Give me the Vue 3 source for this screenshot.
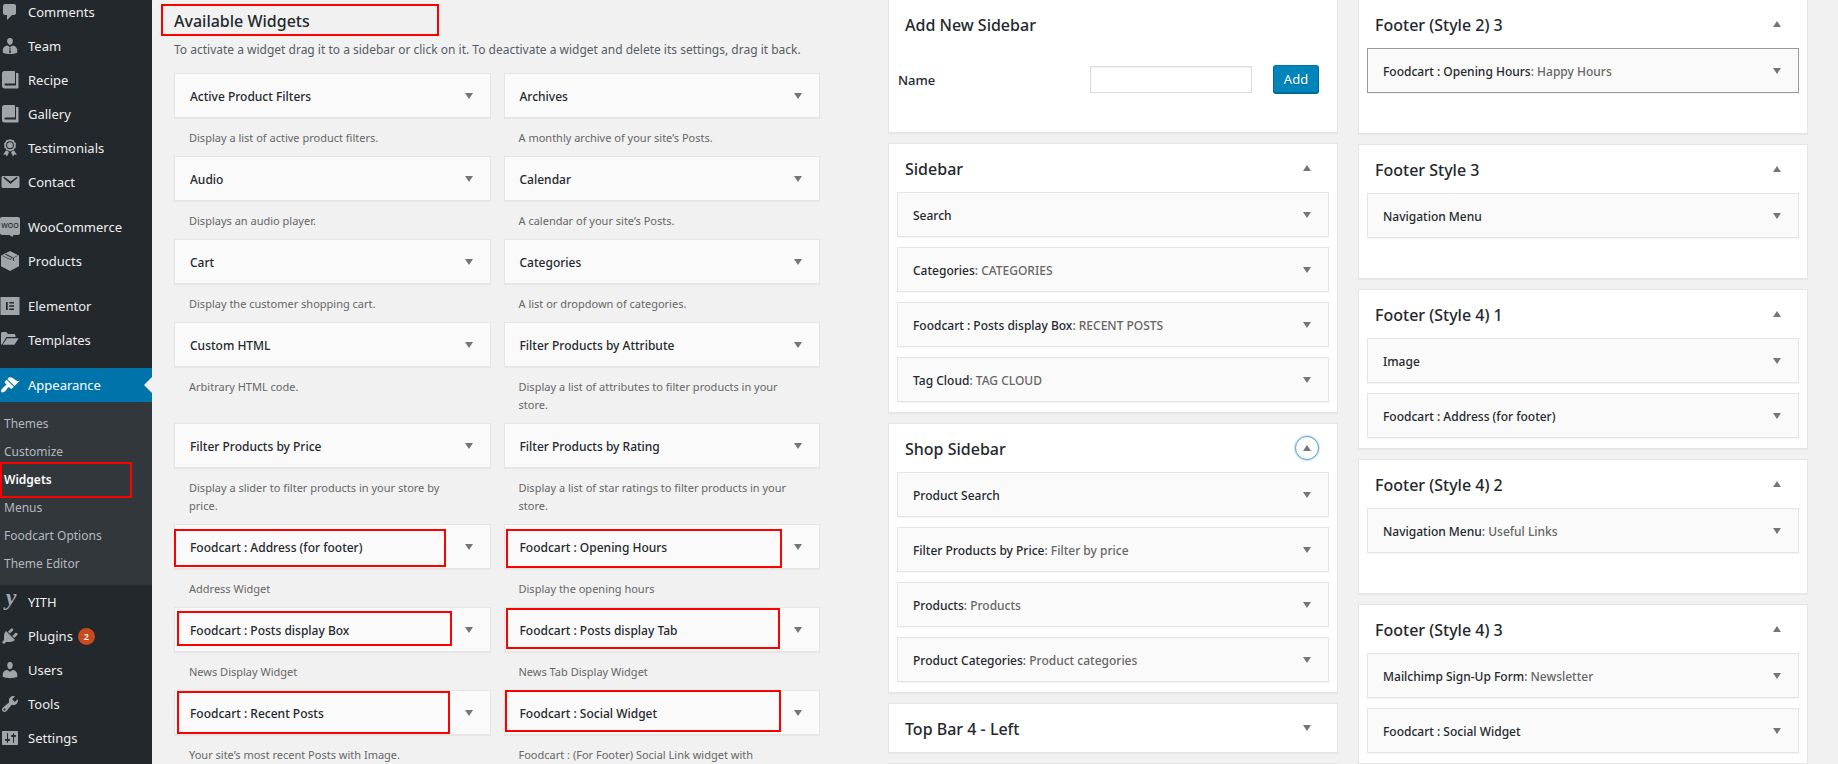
<template>
  <div class="admin">
    <nav class="menu" aria-label="Main menu">
      <ul class="menu-list">
        <li
          v-for="item in menu"
          :key="item.label"
          :class="{ 'menu-item--spaced': item.spaced }"
        >
          <a href="#" class="menu-link" :class="{ 'menu-link--current': item.children }">
            <svg class="menu-icon" viewBox="0 0 20 20" aria-hidden="true">
              <path :d="icons[item.icon]" fill-rule="evenodd" />
              <text v-if="item.icon === 'woo'" x="10" y="11" class="woo-mark">WOO</text>
              <text v-if="item.icon === 'yith'" x="11" y="13" class="yith-mark">y</text>
            </svg>
            <span>{{ item.label }}</span>
            <span v-if="item.count" class="menu-count">{{ item.count }}</span>
          </a>
          <ul v-if="item.children" class="submenu">
            <li v-for="child in item.children" :key="child">
              <a href="#" class="submenu-link" :class="{ 'submenu-link--current': child === 'Widgets' }">{{ child }}</a>
              <span v-if="child === 'Widgets'" class="marker marker--submenu"></span>
            </li>
          </ul>
        </li>
      </ul>
    </nav>

    <main class="content">
      <section class="available" aria-labelledby="available-heading">
        <header class="available-header">
          <h2 id="available-heading">Available Widgets</h2>
          <span class="marker marker--heading"></span>
          <p>To activate a widget drag it to a sidebar or click on it. To deactivate a widget and delete its settings, drag it back.</p>
        </header>
        <ul class="available-list">
          <li v-for="widget in available" :key="widget.title" class="available-item">
            <div class="widget">
              <h3>{{ widget.title }}</h3>
              <button type="button" class="toggle" :aria-label="`Add widget: ${widget.title}`">
                <svg viewBox="0 0 8 6" aria-hidden="true"><path d="M0 0h8L4 6z" /></svg>
              </button>
            </div>
            <span v-if="widget.mark" class="marker" :style="markerStyle(widget.mark)"></span>
            <p class="widget-description">{{ widget.description }}</p>
          </li>
        </ul>
      </section>

      <div class="sidebars">
        <div v-for="(column, index) in columns" :key="index" class="sidebars-column">
          <section v-if="index === 0" class="panel">
            <header class="panel-header">
              <h2>Add New Sidebar</h2>
            </header>
            <form class="add-form" @submit.prevent>
              <label for="sidebar-name">Name</label>
              <input id="sidebar-name" v-model="sidebarName" type="text" />
              <button type="submit" class="add-button">Add</button>
            </form>
          </section>
          <section v-for="panel in column" :key="panel.title" class="panel">
            <header class="panel-header">
              <h2>{{ panel.title }}</h2>
              <button
                v-if="panel.title"
                type="button"
                class="toggle"
                :class="{ 'toggle--focused': panel.focused }"
                :aria-label="panel.title"
                :aria-expanded="Boolean(panel.widgets)"
              >
                <svg viewBox="0 0 8 6" aria-hidden="true"><path :d="panel.widgets ? 'M0 6h8L4 0z' : 'M0 0h8L4 6z'" /></svg>
              </button>
            </header>
            <ul v-if="panel.widgets" class="panel-widgets">
              <li
                v-for="[title, name] in panel.widgets"
                :key="title"
                class="widget"
                :class="{ 'widget--hover': panel.hovered }"
              >
                <h3>{{ title }}<span v-if="name" class="widget-name">: {{ name }}</span></h3>
                <button type="button" class="toggle" :aria-label="`Edit widget: ${title}`">
                  <svg viewBox="0 0 8 6" aria-hidden="true"><path d="M0 0h8L4 6z" /></svg>
                </button>
              </li>
            </ul>
          </section>
        </div>
      </div>
    </main>
  </div>
</template>

<script setup>
import { ref } from "vue";

const sidebarName = ref("");

const icons = {
  comments: "M5 2h9c1.1 0 2 .9 2 2v7c0 1.1-.9 2-2 2h-2l-5 5v-5H5c-1.1 0-2-.9-2-2V4c0-1.1.9-2 2-2z",
  team: "M10 2c1.8 0 2.9 1.3 2.9 3.1C12.900 7 11.600 8.900 10 8.900S7.100 7 7.100 5.100C7.100 3.300 8.200 2 10 2zM7.300 9.600 10 11l2.700-1.400c2.600.4 4.500 2.200 4.500 4.500v2.700c-2 .8-4.500 1.200-7.200 1.200s-5.200-.4-7.200-1.200v-2.700c0-2.300 1.900-4.100 4.500-4.500zM9.200 11.800l.5 1.200-.6 3.500.9 1 .9-1-.6-3.500.5-1.200z",
  book: "M4.500 1H14c.6 0 1 .4 1 1v11.500H5.500c-1.400 0-1.400 2 0 2H16V3h1.500c.6 0 1 .4 1 1v13.500c0 .6-.4 1-1 1h-13C3 18.500 2 17.500 2 16V3.500C2 2 3 1 4.500 1z",
  awards: "M10 1l1.700 1 2 .1.800 1.800 1.400 1.400-.3 1.900.3 2-1.400 1.300-.8 1.800-2 .2-1.700 1-1.700-1-2-.2-.8-1.800-1.400-1.300.3-2-.3-1.900L5.500 3.900l.8-1.800 2-.1zM10 3.300a3.900 3.900 0 1 0 0 7.800 3.900 3.900 0 0 0 0-7.800zM10 4.300a2.900 2.900 0 1 1 0 5.800 2.900 2.900 0 0 1 0-5.800zM5.700 12.700l2 .4 1.300 1.200-2 4.200-1.400-1.900-2.500.2zM14.300 12.700l2.600 4.100-2.500-.2-1.400 1.900-2-4.200 1.300-1.200z",
  email: "M3 4h15c.8 0 1.500.7 1.500 1.500v9c0 .8-.7 1.500-1.500 1.500H3c-.8 0-1.500-.7-1.500-1.500v-9C1.500 4.700 2.200 4 3 4zm.3 1.700 7.200 6.300 7.200-6.300-.9-.9-6.300 4.800L4.200 4.800z",
  woo: "M2 0h16c1.100 0 2 .9 2 2v14c0 1.100-.9 2-2 2h-4.500l-1 2-3-2H2c-1.100 0-2-.9-2-2V2C0 .9.900 0 2 0z",
  products: "M10 0 19 4.500v10.800L10 20l-9-4.700V4.500zM2 4.800 10 8.800l8-4-.5-.4L10 8 2.500 4.400zM6 2.900l8 4v3.300l-1-.6V7.500L5 3.500z",
  elementor: "M.5 1h19v18H.5zM6 6v8h1.700V6zM9.300 6v1.500H14V6zM9.300 9.200v1.600H14V9.200zM9.300 12.500V14H14v-1.500z",
  templates: "M1 14.500V3.800C1 2.800 1.600 2 2.500 2h3.800L8 4h6c.8 0 1.500.6 1.500 1.500V7H6.300L2 14.500zM6.900 8.300H18.700L14.500 14.800H2.700z",
  appearance:
    "M14.480 11.060L7.410 3.990l1.500-1.500c.5-.56 2.300-.47 3.510.32 1.210.8 1.430 1.280 2.910 2.100 1.180.64 2.450 1.260 4.450.85zm-.71.71L6.700 4.700 4.930 6.470c-.39.39-.39 1.020 0 1.410l1.060 1.060c.39.39.39 1.030 0 1.420-.6.6-1.430 1.110-2.210 1.690-.35.26-.7.53-1.010.84C1.430 14.230.4 16.080 1.400 17.070c.99 1 2.840-.03 4.180-1.360.31-.31.58-.66.85-1.020.57-.78 1.080-1.610 1.690-2.210.39-.39 1.020-.39 1.410 0l1.060 1.060c.39.39 1.020.39 1.410 0z",
  yith: "",
  plugins:
    "M13.110 4.360L9.870 7.600 8 5.730l3.240-3.240c.35-.34 1.050-.2 1.560.32.52.51.66 1.210.31 1.550zm-8 1.770l.91-1.120 9.010 9.010-1.190.84c-.71.71-2.630 1.160-3.820 1.160H6.140L4.900 17.260c-.59.59-1.540.59-2.120 0-.59-.58-.59-1.530 0-2.120l1.240-1.240v-3.880c0-1.130.4-3.190 1.090-3.890zm7.260 3.970l3.240-3.240c.34-.35 1.040-.21 1.550.31.52.51.66 1.210.31 1.550l-3.240 3.250z",
  users:
    "M10 9.250c-2.270 0-2.730-3.440-2.730-3.440C7 4.020 7.820 2 9.970 2c2.160 0 2.980 2.020 2.710 3.810 0 0-.41 3.440-2.680 3.440zm0 2.570L12.720 10c2.390 0 4.520 2.330 4.520 4.530v2.490s-3.650 1.130-7.240 1.130c-3.650 0-7.240-1.130-7.240-1.130v-2.490c0-2.250 1.940-4.480 4.470-4.480z",
  tools:
    "M16.680 9.770c-1.340 1.340-3.300 1.670-4.950.99l-5.410 6.520c-.99.99-2.590.99-3.580 0s-.99-2.590 0-3.570l6.520-5.420c-.68-1.650-.35-3.610.99-4.950 1.280-1.280 3.120-1.620 4.720-1.060l-2.890 2.890 2.820 2.820 2.860-2.870c.53 1.580.18 3.390-1.080 4.650zM3.810 16.210c.4.390 1.040.39 1.430 0 .4-.4.4-1.040 0-1.430-.39-.4-1.030-.4-1.430 0-.39.39-.39 1.030 0 1.430z",
  settings:
    "M18 16V4c0-.55-.45-1-1-1H3c-.55 0-1 .45-1 1v12c0 .55.45 1 1 1h14c.55 0 1-.45 1-1zM8 11h1c.55 0 1 .45 1 1s-.45 1-1 1H8v1.500c0 .28-.22.5-.5.5s-.5-.22-.5-.5V13H6c-.55 0-1-.45-1-1s.45-1 1-1h1V5.500c0-.28.22-.5.5-.5s.5.22.5.5V11zm5-2h-1c-.55 0-1-.45-1-1s.45-1 1-1h1V5.500c0-.28.22-.5.5-.5s.5.22.5.5V7h1c.55 0 1 .45 1 1s-.45 1-1 1h-1v5.500c0 .28-.22.5-.5.5s-.5-.22-.5-.5V9z",
};

const menu = [
  { label: "Comments", icon: "comments" },
  { label: "Team", icon: "team" },
  { label: "Recipe", icon: "book" },
  { label: "Gallery", icon: "book" },
  { label: "Testimonials", icon: "awards" },
  { label: "Contact", icon: "email" },
  { label: "WooCommerce", icon: "woo", spaced: true },
  { label: "Products", icon: "products" },
  { label: "Elementor", icon: "elementor", spaced: true },
  { label: "Templates", icon: "templates" },
  {
    label: "Appearance",
    icon: "appearance",
    spaced: true,
    children: ["Themes", "Customize", "Widgets", "Menus", "Foodcart Options", "Theme Editor"],
  },
  { label: "YITH", icon: "yith" },
  { label: "Plugins", icon: "plugins", count: 2 },
  { label: "Users", icon: "users" },
  { label: "Tools", icon: "tools" },
  { label: "Settings", icon: "settings" },
];

// mark: [left, top, width, height] of the red frame over the widget
const available = [
  { title: "Active Product Filters", description: "Display a list of active product filters." },
  { title: "Archives", description: "A monthly archive of your site’s Posts." },
  { title: "Audio", description: "Displays an audio player." },
  { title: "Calendar", description: "A calendar of your site’s Posts." },
  { title: "Cart", description: "Display the customer shopping cart." },
  { title: "Categories", description: "A list or dropdown of categories." },
  { title: "Custom HTML", description: "Arbitrary HTML code." },
  { title: "Filter Products by Attribute", description: "Display a list of attributes to filter products in your store." },
  { title: "Filter Products by Price", description: "Display a slider to filter products in your store by price." },
  { title: "Filter Products by Rating", description: "Display a list of star ratings to filter products in your store." },
  { title: "Foodcart : Address (for footer)", description: "Address Widget", mark: [0, 5, 272, 38] },
  { title: "Foodcart : Opening Hours", description: "Display the opening hours", mark: [2, 5, 276, 39] },
  { title: "Foodcart : Posts display Box", description: "News Display Widget", mark: [3, 4, 275, 35] },
  { title: "Foodcart : Posts display Tab", description: "News Tab Display Widget", mark: [2, 1, 274, 41] },
  { title: "Foodcart : Recent Posts", description: "Your site’s most recent Posts with Image.", mark: [3, 1, 273, 43] },
  { title: "Foodcart : Social Widget", description: "Foodcart : (For Footer) Social Link widget with", mark: [1, 0, 276, 42] },
];

const columns = [
  [
    {
      title: "Sidebar",
      widgets: [["Search"], ["Categories", "CATEGORIES"], ["Foodcart : Posts display Box", "RECENT POSTS"], ["Tag Cloud", "TAG CLOUD"]],
    },
    {
      title: "Shop Sidebar",
      focused: true,
      widgets: [
        ["Product Search"],
        ["Filter Products by Price", "Filter by price"],
        ["Products", "Products"],
        ["Product Categories", "Product categories"],
      ],
    },
    { title: "Top Bar 4 - Left" },
    { title: "" },
  ],
  [
    { title: "Footer (Style 2) 3", hovered: true, widgets: [["Foodcart : Opening Hours", "Happy Hours"]] },
    { title: "Footer Style 3", widgets: [["Navigation Menu"]] },
    { title: "Footer (Style 4) 1", widgets: [["Image"], ["Foodcart : Address (for footer)"]] },
    { title: "Footer (Style 4) 2", widgets: [["Navigation Menu", "Useful Links"]] },
    { title: "Footer (Style 4) 3", widgets: [["Mailchimp Sign-Up Form", "Newsletter"], ["Foodcart : Social Widget"]] },
  ],
];

function markerStyle([left, top, width, height]) {
  return { left: `${left}px`, top: `${top}px`, width: `${width}px`, height: `${height}px` };
}
</script>

<style>
body {
  margin: 0;
  background: #f1f1f1;
}
</style>

<style scoped>
.admin {
  display: flex;
  height: 100vh;
  overflow: hidden;
  background: #f1f1f1;
  color: #23282d;
  font-family: "Noto Sans", "Open Sans", sans-serif;
  font-size: 12px;
  line-height: 18px;
}

ul,
h2,
h3,
p {
  margin: 0;
  padding: 0;
  list-style: none;
}

.menu {
  flex: 0 0 152px;
  background: #23282d;
}

.menu-list {
  margin-top: -5px;
}

.menu-item--spaced {
  margin-top: 11px;
}

.menu-link {
  display: flex;
  align-items: center;
  gap: 8px;
  height: 34px;
  color: #eee;
  font-size: 13px;
  text-decoration: none;
  position: relative;
}

.menu-icon {
  width: 20px;
  height: 20px;
  fill: #a0a5aa;
}

.menu-link--current {
  background: #0073aa;
  color: #fff;
}

.menu-link--current .menu-icon {
  fill: #fff;
}

.menu-link--current::after {
  content: "";
  position: absolute;
  right: 0;
  top: 9px;
  border: 8px solid transparent;
  border-left-width: 0;
  border-right-color: #f1f1f1;
}

.menu-icon .woo-mark {
  fill: #23282d;
  font-size: 7px;
  font-weight: 500;
  text-anchor: middle;
}

.yith-mark {
  font-family: "Liberation Serif", serif;
  font-size: 24px;
  font-style: italic;
  font-weight: 700;
  text-anchor: middle;
}

.menu-count {
  margin-left: -3px;
  width: 17px;
  border-radius: 9px;
  background: #ca4a1f;
  color: #fff;
  font-size: 9px;
  font-weight: 600;
  line-height: 17px;
  text-align: center;
}

.submenu {
  padding: 8px 0 7px;
  background: #32373c;
}

.submenu li {
  position: relative;
}

.submenu-link {
  display: block;
  padding-left: 4px;
  color: #b4b9be;
  line-height: 28px;
  text-decoration: none;
}

.submenu-link--current {
  color: #fff;
  font-weight: 600;
}

.marker {
  position: absolute;
  box-sizing: border-box;
  border: 2px solid #f00;
  pointer-events: none;
}

.marker--submenu {
  left: 0;
  top: -4px;
  width: 132px;
  height: 36px;
}

.marker--heading {
  left: -13px;
  top: -5px;
  width: 278px;
  height: 32px;
}

.content {
  flex: 1;
  display: grid;
  grid-template-columns: 323fr 460fr;
  align-items: start;
  gap: 68px;
  padding: 0 30px 0 22px;
}

.available {
  padding-top: 9px;
}

.available-header {
  position: relative;
  margin-bottom: 13px;
}

.available-header h2,
.panel-header h2 {
  font-size: 16px;
  font-weight: 500;
  line-height: 24px;
}

.available-header p {
  margin-top: 7px;
  color: #555d66;
  line-height: 20px;
  white-space: nowrap;
}

.available-list {
  display: grid;
  grid-template-columns: 1fr 1fr;
  column-gap: 13px;
}

.available-item {
  position: relative;
}

.widget {
  box-sizing: border-box;
  display: flex;
  align-items: center;
  justify-content: space-between;
  height: 45px;
  padding: 0 9px 0 15px;
  border: 1px solid #e5e5e5;
  background: #fafafa;
  box-shadow: 0 1px 1px rgba(0, 0, 0, 0.04);
}

.widget--hover {
  border-color: #999;
}

.widget h3 {
  padding-top: 2px;
  font-size: 12px;
  font-weight: 500;
}

.widget-name {
  color: #666;
}

.widget-description {
  padding: 11px 24px 9px 15px;
  color: #666;
  font-size: 11px;
}

.toggle {
  display: flex;
  align-items: center;
  justify-content: center;
  box-sizing: border-box;
  width: 24px;
  height: 24px;
  padding: 0;
  border: 1px solid transparent;
  border-radius: 50%;
  background: none;
}

.toggle svg {
  width: 8px;
  height: 6px;
  fill: #72777c;
}

.toggle--focused {
  border-color: #5b9dd9;
  box-shadow: 0 0 2px rgba(30, 140, 190, 0.8);
}

.sidebars {
  display: grid;
  grid-template-columns: 1fr 1fr;
  align-items: start;
  gap: 20px;
  margin-top: -1px;
}

.sidebars-column {
  display: flex;
  flex-direction: column;
  gap: 10px;
}

.panel {
  border: 1px solid #e5e5e5;
  background: #fff;
  box-shadow: 0 1px 1px rgba(0, 0, 0, 0.04);
}

.panel-header {
  display: flex;
  align-items: center;
  justify-content: space-between;
  height: 48px;
  padding: 0 18px 0 16px;
}

.panel-header h2 {
  padding-top: 2px;
}

.panel-widgets {
  display: flex;
  flex-direction: column;
  gap: 10px;
  min-height: 75px;
  padding: 0 8px 10px;
}

.add-form {
  display: flex;
  align-items: center;
  padding: 17px 18px 38px 9px;
}

.add-form label {
  flex: 1;
  font-size: 13px;
  font-weight: 500;
}

.add-form input {
  box-sizing: border-box;
  width: 162px;
  height: 27px;
  margin-right: 21px;
  border: 1px solid #ddd;
  background: #fff;
  box-shadow: inset 0 1px 2px rgba(0, 0, 0, 0.07);
}

.add-button {
  box-sizing: border-box;
  width: 46px;
  height: 29px;
  padding: 0;
  border: 1px solid #006799;
  border-top-color: #0073aa;
  border-bottom-width: 2px;
  border-radius: 3px;
  background: #0085ba;
  color: #fff;
  font-family: inherit;
  font-size: 13px;
  text-shadow: 0 1px 1px #006799;
}
</style>
